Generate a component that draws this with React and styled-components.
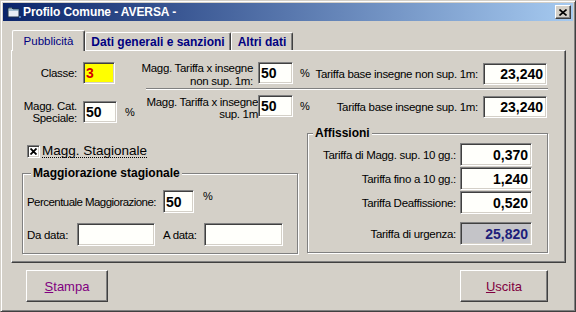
import styled, { createGlobalStyle } from "styled-components";

const GlobalStyle = createGlobalStyle`
  html, body {
    margin: 0;
    padding: 0;
    background: #d4d0c8;
  }
  body {
    font-family: "Liberation Sans", Arial, sans-serif;
  }
`;

const FONT = `"Liberation Sans", Arial, sans-serif`;

const Window = styled.div`
  box-sizing: border-box;
  width: 576px;
  height: 312px;
  background: #d4d0c8;
  border: 1px solid;
  border-color: #d4d0c8 #404040 #404040 #d4d0c8;
  box-shadow: inset 1px 1px #fff, inset -1px -1px #808080;
  padding: 2px;
  display: flex;
  flex-direction: column;
`;

const TitleBar = styled.div`
  height: 18px;
  flex: none;
  display: flex;
  align-items: center;
  padding: 0 2px 0 3px;
  background: linear-gradient(to right, #0a246a, #a6caf0);
`;

const TitleText = styled.div`
  flex: 1;
  margin-left: 1px;
  color: #fff;
  font: bold 12px ${FONT};
  letter-spacing: -0.1px;
  white-space: nowrap;
`;

const CloseButton = styled.div`
  box-sizing: border-box;
  width: 16px;
  height: 14px;
  background: #d4d0c8;
  border: 1px solid;
  border-color: #fff #404040 #404040 #fff;
  box-shadow: inset -1px -1px #808080;
  display: flex;
  align-items: center;
  justify-content: center;
`;

const Body = styled.div`
  flex: 1;
  padding: 9px 7px 0 8px;
  display: flex;
  flex-direction: column;
`;

const TabStrip = styled.div`
  height: 20px;
  margin-left: 1px;
  display: flex;
  align-items: flex-end;
`;

const Tab = styled.div`
  box-sizing: border-box;
  width: ${(p) => p.$w}px;
  height: ${(p) => (p.$active ? 21 : 18)}px;
  margin-bottom: ${(p) => (p.$active ? -1 : 0)}px;
  position: relative;
  z-index: ${(p) => (p.$active ? 2 : 1)};
  background: #d4d0c8;
  border-top: 1px solid #fff;
  border-left: 1px solid #fff;
  border-right: 1px solid #404040;
  box-shadow: inset -1px 0 #808080;
  border-radius: 2px 2px 0 0;
  display: flex;
  align-items: center;
  justify-content: center;
  color: #000080;
  font: ${(p) => (p.$active ? "normal 11.5px" : "bold 12px")} ${FONT};
  white-space: nowrap;
`;

const Panel = styled.div`
  box-sizing: border-box;
  height: 213px;
  border: 1px solid;
  border-color: #fff #404040 #404040 #fff;
  box-shadow: inset -1px -1px #808080;
  padding-top: 11px;
`;

const TopArea = styled.div`
  display: flex;
`;

const LeftCol = styled.div`
  width: 122px;
  flex: none;
`;

const RightCol = styled.div`
  flex: 1;
`;

const Row = styled.div`
  display: flex;
  align-items: ${(p) => p.$align || "center"};
  margin-top: ${(p) => p.$mt || 0}px;
  padding-left: ${(p) => p.$pl || 0}px;
`;

const Label = styled.div`
  box-sizing: border-box;
  width: ${(p) => p.$w}px;
  flex: none;
  margin-top: ${(p) => p.$mt || 0}px;
  margin-left: ${(p) => p.$ml || 0}px;
  text-align: ${(p) => p.$align || "right"};
  font: 11.5px ${FONT};
  letter-spacing: ${(p) => (p.$tight ? -0.55 : -0.3)}px;
  line-height: ${(p) => p.$lh || 12}px;
  color: #000;
  white-space: nowrap;
`;

const Field = styled.input`
  box-sizing: border-box;
  flex: none;
  width: ${(p) => p.$w}px;
  height: ${(p) => p.$h || 22}px;
  margin: ${(p) => p.$mt || 0}px 0 0 ${(p) => p.$ml || 0}px;
  padding: 0 ${(p) => (p.$right ? 3 : 2)}px 0 2px;
  border: 1px solid;
  border-color: #808080 #fff #fff #808080;
  box-shadow: inset 1px 1px #404040, inset -1px -1px #d4d0c8;
  background: ${(p) => p.$bg || "#fffffb"};
  color: ${(p) => p.$color || "#000"};
  font: bold 14px ${FONT};
  text-align: ${(p) => (p.$right ? "right" : "left")};
  outline: none;
  appearance: none;
  border-radius: 0;
`;

const Pct = styled.div`
  width: 8px;
  flex: none;
  margin-left: ${(p) => p.$ml || 7}px;
  align-self: ${(p) => p.$self || "auto"};
  font: 11px ${FONT};
  line-height: ${(p) => p.$lh || 22}px;
  color: #000;
`;

const Separator = styled.div`
  height: 0;
  margin: 0 17px 0 12px;
  border-top: 1px solid #808080;
  border-bottom: 1px solid #fff;
`;

const LowerArea = styled.div`
  display: flex;
  align-items: flex-start;
  gap: 9px;
  margin-top: 9px;
`;

const LeftLower = styled.div`
  width: 276px;
  flex: none;
  margin-left: 10px;
  padding-top: 11px;
`;

const CheckRow = styled.div`
  display: flex;
  align-items: center;
  padding-left: 5px;
`;

const CheckBox = styled.div`
  box-sizing: border-box;
  width: 13px;
  height: 13px;
  background: #fff;
  border: 1px solid;
  border-color: #808080 #fff #fff #808080;
  box-shadow: inset 1px 1px #404040, inset -1px -1px #d4d0c8;
  display: flex;
  align-items: center;
  justify-content: center;
`;

const CheckLabel = styled.div`
  margin-left: 2px;
  font: 13.5px ${FONT};
  line-height: 13px;
  color: #000;
  border-bottom: 1px dotted #000;
`;

const GroupBox = styled.div`
  box-sizing: border-box;
  width: ${(p) => p.$w}px;
  margin-top: ${(p) => p.$mt || 0}px;
  border: 1px solid #808080;
  box-shadow: inset 1px 1px #fff, 1px 1px #fff;
  padding: 0 0 7px ${(p) => p.$pl || 0}px;
`;

const GroupTitle = styled.div`
  width: fit-content;
  margin: -8px 0 0 ${(p) => p.$ml || 4}px;
  padding: 0 2px;
  background: #d4d0c8;
  font: bold 12px ${FONT};
  line-height: 14px;
  color: #000;
`;

const ButtonBar = styled.div`
  display: flex;
  justify-content: space-between;
  margin-top: 7px;
  padding: 0 18px 0 15px;
`;

const Button = styled.div`
  box-sizing: border-box;
  width: ${(p) => p.$w}px;
  height: 32px;
  border: 1px solid;
  border-color: #fff #404040 #404040 #fff;
  box-shadow: inset -1px -1px #808080;
  display: flex;
  align-items: center;
  justify-content: center;
  color: ${(p) => p.$color};
  font: 13px ${FONT};
`;

function FolderIcon() {
  return (
    <svg width="16" height="16" viewBox="0 0 16 16">
      <path d="M2 4h4l1 1h6v8H2z" fill="#e8eef4" stroke="#1c3048" strokeWidth="1" />
      <path d="M2 6h11" stroke="#5a8aa8" strokeWidth="1" />
      <rect x="3" y="3" width="3" height="1" fill="#2a4a68" />
      <rect x="13" y="12" width="2" height="2" fill="#4a7ab8" />
    </svg>
  );
}

function CloseGlyph() {
  return (
    <svg width="8" height="7" viewBox="0 0 8 7">
      <path d="M0.5 0.5L7.5 6.5M7.5 0.5L0.5 6.5" stroke="#000" strokeWidth="1.6" />
    </svg>
  );
}

function CrossMark() {
  return (
    <svg width="7" height="7" viewBox="0 0 7 7">
      <path d="M0.5 0.5L6.5 6.5M6.5 0.5L0.5 6.5" stroke="#000" strokeWidth="1.8" />
    </svg>
  );
}

const affissioni = [
  { label: "Tariffa di Magg. sup. 10 gg.:", value: "0,370" },
  { label: "Tariffa fino a 10 gg.:", value: "1,240" },
  { label: "Tariffa Deaffissione:", value: "0,520" },
];

export default function App() {
  return (
    <>
      <GlobalStyle />
      <Window>
        <TitleBar>
          <FolderIcon />
          <TitleText>Profilo Comune - AVERSA -</TitleText>
          <CloseButton>
            <CloseGlyph />
          </CloseButton>
        </TitleBar>

        <Body>
          <TabStrip>
            <Tab $active $w={73}>Pubblicità</Tab>
            <Tab $w={146}>Dati generali e sanzioni</Tab>
            <Tab $w={62}>Altri dati</Tab>
          </TabStrip>

          <Panel>
            <TopArea>
              <LeftCol>
                <Row>
                  <Label $w={65} $lh={22}>Classe:</Label>
                  <Field $w={32} $ml={6} $bg="#ffff00" $color="#d40000" readOnly value="3" />
                </Row>
                <Row $mt={16}>
                  <Label $w={65}>
                    Magg. Cat.
                    <br />
                    Speciale:
                  </Label>
                  <Field $w={34} $ml={6} readOnly value="50" />
                  <Pct $ml={8}>%</Pct>
                </Row>
              </LeftCol>

              <RightCol>
                <Row $align="flex-start">
                  <Label $w={119} $lh={13}>
                    Magg. Tariffa x insegne
                    <br />
                    non sup. 1m:
                  </Label>
                  <Field $w={35} $ml={5} readOnly value="50" />
                  <Pct>%</Pct>
                  <Label $w={170} $lh={22} $mt={1}>Tariffa base insegne non sup. 1m:</Label>
                  <Field $w={64} $ml={5} $mt={1} $right readOnly value="23,240" />
                </Row>
                <Separator />
                <Row $align="flex-start" $mt={5}>
                  <Label $w={124} $mt={1}>
                    Magg. Tariffa x insegne
                    <br />
                    sup. 1m
                  </Label>
                  <Field $w={35} readOnly value="50" />
                  <Pct>%</Pct>
                  <Label $w={170} $lh={22} $mt={1}>Tariffa base insegne sup. 1m:</Label>
                  <Field $w={64} $ml={5} $mt={1} $right readOnly value="23,240" />
                </Row>
              </RightCol>
            </TopArea>

            <LowerArea>
              <LeftLower>
                <CheckRow>
                  <CheckBox>
                    <CrossMark />
                  </CheckBox>
                  <CheckLabel>Magg. Stagionale</CheckLabel>
                </CheckRow>

                <GroupBox $w={276} $mt={15} $pl={4}>
                  <GroupTitle $ml={4}>Maggiorazione stagionale</GroupTitle>
                  <Row $mt={10}>
                    <Label $w={136} $align="left" $tight>Percentuale Maggiorazione:</Label>
                    <Field $w={31} $h={23} readOnly value="50" />
                    <Pct $ml={9} $lh={12} $self="flex-start">%</Pct>
                  </Row>
                  <Row $mt={10}>
                    <Label $w={50} $align="left">Da data:</Label>
                    <Field $w={78} $h={23} readOnly value="" />
                    <Label $w={41} $ml={8} $align="left">A data:</Label>
                    <Field $w={79} $h={23} readOnly value="" />
                  </Row>
                </GroupBox>
              </LeftLower>

              <GroupBox $w={241}>
                <GroupTitle $ml={5}>Affissioni</GroupTitle>
                {affissioni.map((a, i) => (
                  <Row key={a.label} $mt={i === 0 ? 3 : 1}>
                    <Label $w={148}>{a.label}</Label>
                    <Field $w={72} $h={23} $ml={4} $right readOnly value={a.value} />
                  </Row>
                ))}
                <Row $mt={8}>
                  <Label $w={148}>Tariffa di urgenza:</Label>
                  <Field
                    $w={72}
                    $h={23}
                    $ml={4}
                    $right
                    $bg="#c4c4c8"
                    $color="#1e1e7a"
                    readOnly
                    value="25,820"
                  />
                </Row>
              </GroupBox>
            </LowerArea>
          </Panel>

          <ButtonBar>
            <Button $w={82} $color="#800080">
              <span>
                <u>S</u>tampa
              </span>
            </Button>
            <Button $w={88} $color="#800040">
              <span>
                <u>U</u>scita
              </span>
            </Button>
          </ButtonBar>
        </Body>
      </Window>
    </>
  );
}
